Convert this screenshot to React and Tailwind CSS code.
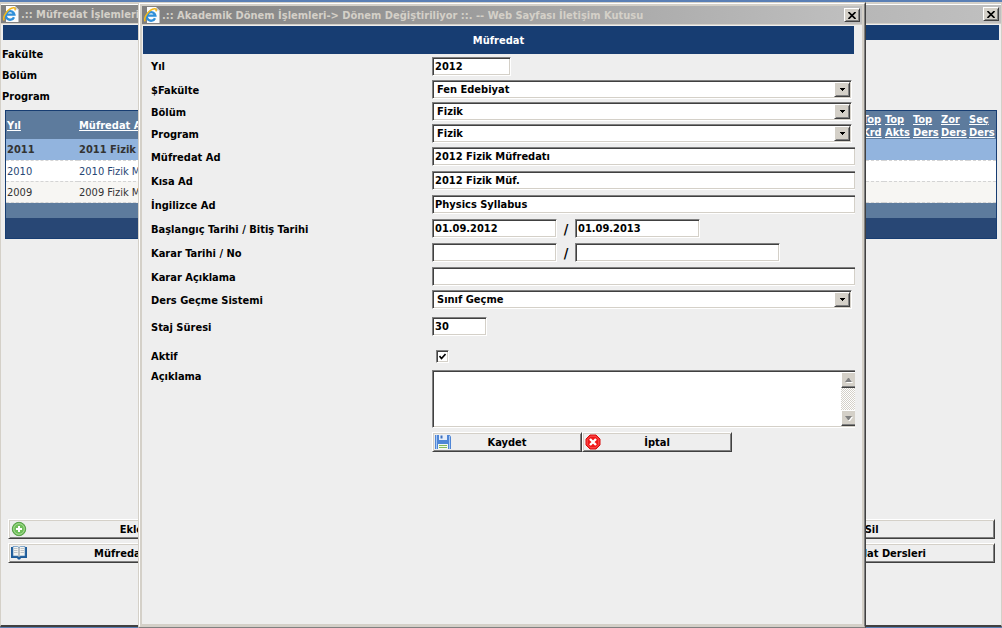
import React, { useState } from 'react';

const SUNKEN = 'border border-t-[#808080] border-l-[#808080] border-r-white border-b-white shadow-[inset_1px_1px_0_#404040,inset_-1px_-1px_0_#d4d0c8]';
const RAISED = 'border border-t-white border-l-white border-r-[#404040] border-b-[#404040] shadow-[inset_1px_1px_0_#d4d0c8,inset_-1px_-1px_0_#808080]';

const PageIcon = () => (
    <svg width="16" height="16" viewBox="0 0 16 16" className="shrink-0" aria-hidden="true">
        <path d="M3 0h9l3.500 3.500V16H3z" fill="#fbfbfb" />
        <path d="M12 0v3.500h3.500z" fill="#c9c9c9" />
        <path d="M11 11.200A4.300 4.300 0 1 1 11.300 8.600H3.500" fill="none" stroke="#2f8fd8" strokeWidth="2.400" />
        <path d="M1.200 14.300C-1 11 5 2.200 10.500 1.700c2-.1 2 1.300 1.300 2.600" fill="none" stroke="#f2b81c" strokeWidth="1.500" />
    </svg>
);

const AddIcon = () => (
    <svg width="16" height="16" viewBox="0 0 16 16" aria-hidden="true">
        <circle cx="8" cy="8" r="6.700" fill="#6fbf5a" stroke="#559f46" />
        <circle cx="8" cy="8" r="5.300" fill="none" stroke="#a9dc98" />
        <path d="M8 5v6M5 8h6" stroke="#fff" strokeWidth="2" />
    </svg>
);

const BookIcon = () => (
    <svg width="16" height="16" viewBox="0 0 16 16" aria-hidden="true">
        <path d="M0 2h16v11h-6l-1 1.500H7L6 13H0z" fill="#1f5c99" />
        <path d="M2 1.500h4.500L8 2.500l1.500-1H14V11H9.500L8 12l-1.500-1H2z" fill="#f4f4f0" stroke="#3d7ab5" strokeWidth=".6" />
        <path d="M8 2.500V12" stroke="#8f9aa5" strokeWidth="1.200" />
        <path d="M3 3.500h3.500M3 5.500h3.500M3 7.500h3.500M9.500 3.500H13M9.500 5.500H13M9.500 7.500H13" stroke="#bfc4c8" />
    </svg>
);

const SaveIcon = () => (
    <svg width="16" height="16" viewBox="0 0 16 16" aria-hidden="true">
        <path d="M0 1h14.500L16 2.500V15H0z" fill="#4f86d6" />
        <path d="M1.500 1v14M14.500 2v13" stroke="#a8c8f4" />
        <path d="M4 1h8v5H4z" fill="#e6eefa" />
        <path d="M5.500 1.500h2v3h-2z" fill="#3f70bd" />
        <path d="M3 10h10v5H3z" fill="#f4f8f0" />
        <path d="M4 11.500h8M4 13.500h8" stroke="#86bb5c" />
    </svg>
);

const CancelIcon = () => (
    <svg width="16" height="16" viewBox="0 0 16 16" aria-hidden="true">
        <path d="M5 1h6l4 4v6l-4 4H5l-4-4V5z" fill="#f01818" stroke="#d80c0c" />
        <path d="M5.400 2.200h5.200l3.200 3.200v5.200l-3.200 3.200H5.400l-3.200-3.200V5.400z" fill="none" stroke="#ff7070" strokeWidth=".7" />
        <path d="M5 5l6 6M11 5l-6 6" stroke="#fff" strokeWidth="2.400" />
    </svg>
);

const CloseButton = () => (
    <button type="button" aria-label="Kapat" className={`flex h-[14px] w-4 shrink-0 items-center justify-center bg-[#d4d0c8] ${RAISED}`}>
        <svg width="8" height="7" viewBox="0 0 8 7" aria-hidden="true">
            <path d="M.5 0l7 7M7.500 0l-7 7" stroke="#000" strokeWidth="1.600" />
        </svg>
    </button>
);

const TitleBar = ({ title }) => (
    <div className="flex h-[18px] shrink-0 items-center gap-[2px] bg-linear-to-r from-[#808080] to-[#c0c0c0] px-[2px]">
        <PageIcon />
        <div className="min-w-0 flex-1 overflow-hidden whitespace-nowrap text-[#d4d0c8]">{title}</div>
        <CloseButton />
    </div>
);

const IconButton = ({ icon, children, className = '' }) => (
    <button type="button" className={`relative h-5 bg-[#eeeeee] text-center ${RAISED} ${className}`}>
        <span className="absolute top-px left-[2px]">{icon}</span>
        {children}
    </button>
);

const TextInput = ({ className = '', ...props }) => (
    <input type="text" className={`mb-px h-[19px] bg-white pl-[2px] outline-none ${SUNKEN} ${className}`} {...props} />
);

const Select = ({ id, value }) => (
    <div className={`relative mr-[3px] mb-px flex h-[19px] flex-1 bg-white p-px ${SUNKEN}`}>
        <select id={id} className="w-full appearance-none pl-[3px] outline-none" defaultValue={value}>
            <option>{value}</option>
        </select>
        <span className={`pointer-events-none absolute top-px right-px bottom-px flex w-4 items-center justify-center bg-[#d4d0c8] ${RAISED}`}>
            <svg width="5" height="3" viewBox="0 0 5 3" aria-hidden="true">
                <path d="M0 0h5v1H4v1H3v1H2V2H1V1H0z" fill="#000" />
            </svg>
        </span>
    </div>
);

const Row = ({ label, htmlFor, height = 'h-6', children }) => (
    <div className={`flex items-center ${height}`}>
        <label htmlFor={htmlFor} className="w-[281px] shrink-0">{label}</label>
        {children}
    </div>
);

const Slash = () => <span className="w-[18px] text-center text-[14px]">/</span>;

const ScrollArrow = ({ d }) => (
    <div className="flex h-4 items-center justify-center border-t border-b border-l border-t-white border-b-[#404040] border-l-white bg-[#d4d0c8] shadow-[inset_0_-1px_0_#808080]">
        <svg width="8" height="5" viewBox="0 0 8 5" aria-hidden="true">
            <path d={d} fill="#fff" transform="translate(1 1)" />
            <path d={d} fill="#808080" />
        </svg>
    </div>
);

const headers = [
    ['Top', 'Krd'],
    ['Top', 'Akts'],
    ['Top', 'Ders'],
    ['Zor', 'Ders'],
    ['Seç', 'Ders'],
];

const rows = [
    { year: '2011', name: '2011 Fizik', style: 'bg-[#92b4de] font-bold text-[#333333]' },
    { year: '2010', name: '2010 Fizik Müf.', style: 'bg-white font-normal text-[#284775]' },
    { year: '2009', name: '2009 Fizik Müf.', style: 'bg-[#f7f6f3] font-normal text-[#333333]' },
];

const CurriculumWindow = () => (
    <div className="flex h-full flex-col border-x border-t-2 border-b-2 border-x-[#d4d0c8] border-t-[#d4d0c8] border-b-[#404040] bg-[#eeeeee]">
        <div className="h-px shrink-0 bg-white" />
        <TitleBar title=".:: Müfredat İşlemleri" />
        <div className="h-px shrink-0 bg-[#d4d0c8]" />
        <div className="mx-[2px] mt-px h-[15px] shrink-0 bg-[#173d72]" />
        <div className="mt-1 pl-px leading-[21px]">
            <div>Fakülte</div>
            <div>Bölüm</div>
            <div>Program</div>
        </div>
        <div className="mx-1 mt-[3px] border border-[#173d72]">
            <table className="w-full table-fixed border-collapse text-left">
                <colgroup>
                    <col className="w-[72px]" />
                    <col />
                    <col className="w-[23px]" />
                    <col className="w-7" />
                    <col className="w-7" />
                    <col className="w-7" />
                    <col className="w-7" />
                </colgroup>
                <thead>
                    <tr className="h-7 bg-[#5d7b9d] text-white">
                        <th className="pt-px pl-px"><a href="#yil" className="underline">Yıl</a></th>
                        <th className="pt-px pl-px"><a href="#ad" className="underline">Müfredat Ad</a></th>
                        {headers.map(([top, bottom], i) => (
                            <th key={i} className="pt-px pl-px leading-[13px]">
                                <a href="#sirala" className="underline">{top}<br />{bottom}</a>
                            </th>
                        ))}
                    </tr>
                </thead>
                <tbody>
                    {rows.map((row) => (
                        <tr key={row.year} className={`h-[21px] border-b border-dashed border-[#d4d4d4] ${row.style}`}>
                            <td className="pt-px pl-px">{row.year}</td>
                            <td className="pt-px pl-px">{row.name}</td>
                            <td colSpan={5} />
                        </tr>
                    ))}
                </tbody>
            </table>
            <div className="h-[15px] bg-[#5d7b9d]" />
            <div className="h-5 bg-[#284775]" />
        </div>
        <div className="mt-auto mr-[6px] ml-[7px] flex flex-col gap-1 pb-[62px]">
            <div className="flex justify-between">
                <IconButton icon={<AddIcon />} className="w-1/4">Ekle</IconButton>
                <IconButton className="w-1/4">Sil</IconButton>
            </div>
            <div className="flex justify-between">
                <IconButton icon={<BookIcon />} className="w-1/4">Müfredat Gör</IconButton>
                <IconButton className="w-[24%]">Müfredat Dersleri</IconButton>
            </div>
        </div>
    </div>
);

const PeriodDialog = () => {
    const [active, setActive] = useState(true);

    return (
        <div className="absolute top-[2px] right-[136px] bottom-0 left-[138px] border border-t-[#d4d0c8] border-r-[#404040] border-b-[#808080] border-l-[#d4d0c8]">
            <div className="flex h-full flex-col border border-t-white border-r-[#808080] border-b-[#d4d0c8] border-l-white bg-[#eeeeee]">
                <div className="flex min-h-0 flex-1 flex-col border-2 border-[#d4d0c8]">
                    <TitleBar title=".:: Akademik Dönem İşlemleri-> Dönem Değiştiriliyor ::. -- Web Sayfası İletişim Kutusu" />
                    <div className="h-px shrink-0 bg-[#d4d0c8]" />
                    <form className="mt-px mr-[7px] ml-px">
                        <h1 className="mr-px flex h-7 items-center justify-center bg-[#173d72] text-white">Müfredat</h1>
                        <div className="pl-2">
                            <Row label="Yıl" htmlFor="yil" height="h-[25px]">
                                <TextInput id="yil" defaultValue="2012" className="w-[79px]" />
                            </Row>
                            <Row label="$Fakülte" htmlFor="fakulte" height="h-[22px]">
                                <Select id="fakulte" value="Fen Edebiyat" />
                            </Row>
                            <Row label="Bölüm" htmlFor="bolum" height="h-[22px]">
                                <Select id="bolum" value="Fizik" />
                            </Row>
                            <Row label="Program" htmlFor="program" height="h-[22px]">
                                <Select id="program" value="Fizik" />
                            </Row>
                            <Row label="Müfredat Ad" htmlFor="ad">
                                <TextInput id="ad" defaultValue="2012 Fizik Müfredatı" className="flex-1 border-r-0" />
                            </Row>
                            <Row label="Kısa Ad" htmlFor="kisa">
                                <TextInput id="kisa" defaultValue="2012 Fizik Müf." className="flex-1 border-r-0" />
                            </Row>
                            <Row label="İngilizce Ad" htmlFor="ingilizce">
                                <TextInput id="ingilizce" defaultValue="Physics Syllabus" className="flex-1 border-r-0" />
                            </Row>
                            <Row label="Başlangıç Tarihi / Bitiş Tarihi" htmlFor="baslangic">
                                <TextInput id="baslangic" defaultValue="01.09.2012" className="w-[125px]" />
                                <Slash />
                                <TextInput aria-label="Bitiş Tarihi" defaultValue="01.09.2013" className="w-[125px]" />
                            </Row>
                            <Row label="Karar Tarihi / No" htmlFor="karar">
                                <TextInput id="karar" className="w-[125px]" />
                                <Slash />
                                <TextInput aria-label="Karar No" className="w-[205px]" />
                            </Row>
                            <Row label="Karar Açıklama" htmlFor="kararAciklama">
                                <TextInput id="kararAciklama" className="flex-1 border-r-0" />
                            </Row>
                            <Row label="Ders Geçme Sistemi" htmlFor="sistem" height="h-[22px]">
                                <Select id="sistem" value="Sınıf Geçme" />
                            </Row>
                            <Row label="Staj Süresi" htmlFor="staj" height="h-8">
                                <TextInput id="staj" defaultValue="30" className="w-[55px]" />
                            </Row>
                            <Row label="Aktif" htmlFor="aktif" height="h-[27px]">
                                <span className="relative ml-1 flex">
                                    <input
                                        id="aktif"
                                        type="checkbox"
                                        checked={active}
                                        onChange={(e) => setActive(e.target.checked)}
                                        className={`size-[13px] appearance-none bg-white ${SUNKEN}`}
                                    />
                                    {active && (
                                        <svg width="7" height="7" viewBox="0 0 7 7" className="pointer-events-none absolute top-[3px] left-[3px]" aria-hidden="true">
                                            <path d="M.5 3l2 2.500L6.500 1" fill="none" stroke="#000" strokeWidth="1.600" />
                                        </svg>
                                    )}
                                </span>
                            </Row>
                            <div className="flex items-start">
                                <label htmlFor="aciklama" className="w-[281px] shrink-0">Açıklama</label>
                                <div className={`flex h-[58px] flex-1 border-r-0 bg-white py-px pl-px ${SUNKEN}`}>
                                    <textarea id="aciklama" className="min-w-0 flex-1 resize-none px-1 outline-none" />
                                    <div className="flex w-[14px] flex-col bg-[repeating-conic-gradient(#d4d0c8_0_25%,#ffffff_0_50%)] bg-size-[2px_2px]">
                                        <ScrollArrow d="M3 0h1l3 4H0z" />
                                        <div className="flex-1" />
                                        <ScrollArrow d="M0 0h7L4 4H3z" />
                                    </div>
                                </div>
                            </div>
                            <div className="mt-1 flex pl-[281px]">
                                <IconButton icon={<SaveIcon />} className="w-[150px]">Kaydet</IconButton>
                                <IconButton icon={<CancelIcon />} className="w-[150px]">İptal</IconButton>
                            </div>
                        </div>
                    </form>
                </div>
            </div>
        </div>
    );
};

const App = () => (
    <div className="relative h-screen overflow-hidden bg-[#5a7fb5] pt-[2px] pb-px font-['DejaVu_Sans_Condensed','DejaVu_Sans',sans-serif] text-[11px] leading-[13px] font-bold text-black">
        <CurriculumWindow />
        <PeriodDialog />
    </div>
);

export default App;
